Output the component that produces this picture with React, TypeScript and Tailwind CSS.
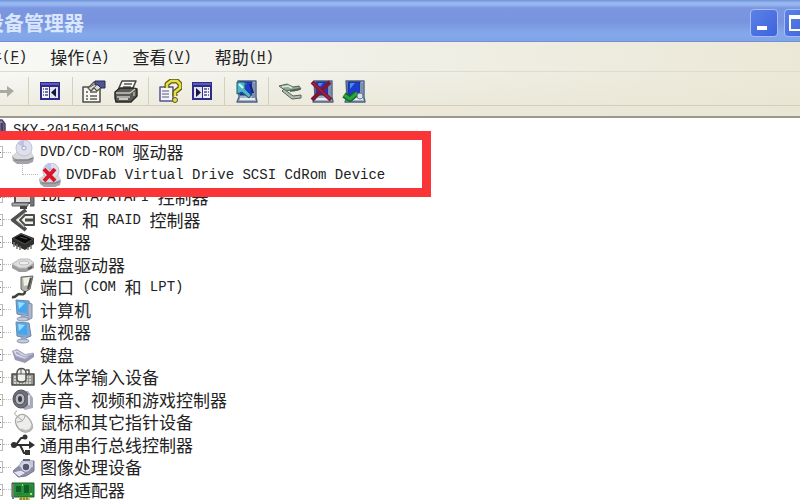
import type { ReactNode } from "react";

const cjk = "font-['Noto_Sans_CJK_SC',sans-serif]";
const mono = "font-['Liberation_Mono','Noto_Sans_CJK_SC',monospace]";

function Svg({ children, size = "size-6" }: { children: ReactNode; size?: string }) {
  return (
    <svg viewBox="0 0 24 24" className={`${size} shrink-0`} aria-hidden="true" strokeLinejoin="round">
      {children}
    </svg>
  );
}

/* Latin runs are set in a monospaced face, Chinese runs in a slightly larger one. */
function Label({ text }: { text: string }) {
  return (
    <span className={`flex items-center whitespace-pre text-[17px] leading-5 ${cjk}`}>
      {text.split(/([\x20-\x7e]+)/).filter(Boolean).map((part, i) => (
        <span key={i} className={/^[\x20-\x7e]/.test(part) ? `text-sm leading-5 ${mono}` : undefined}>
          {part}
        </span>
      ))}
    </span>
  );
}

/* ---------- toolbar icons ---------- */

const ForwardIcon = () => (
  <Svg>
    <path d="M0 11h13V7l7 5-7 6v-4H0z" fill="#aaa9a2" />
  </Svg>
);

function PaneIcon({ flip }: { flip?: boolean }) {
  return (
    <Svg>
      <g transform={flip ? "matrix(-1 0 0 1 24 0)" : undefined}>
        <rect x="2" y="3" width="20" height="18" fill="#2d2c8c" />
        <rect x="3" y="4" width="18" height="2" fill="#5b5bb5" />
        <rect x="4" y="8" width="7" height="11" fill="#f4f4fa" />
        <rect x="12" y="8" width="8" height="11" fill="#e4e4ee" />
        <path d="M5 10h1m1 0h3M5 13h1m1 0h3M5 16h1m1 0h3" stroke="#4a4a86" strokeWidth="1.5" />
        <path d="M18 9v9l-5-4.500z" fill="#16163c" />
      </g>
    </Svg>
  );
}

const PropertiesIcon = () => (
  <Svg>
    <path d="M1 8h17v15H1z" fill="#f7f7f2" stroke="#4b4b48" strokeWidth="1.5" />
    <path d="M4 13h2m2 0h7M4 17h2m2 0h7M4 20h2m2 0h7" stroke="#5e5e5a" strokeWidth="1.6" />
    <path d="M6 9l6-6 6 1 2 4-5 4-3-3-3 3z" fill="#dcdcd2" stroke="#55554e" strokeWidth="1.3" />
    <path d="M13 2h10v7h-4l-3-3h-3z" fill="#4f5493" stroke="#292b55" />
    <path d="M8 8l5-3M10 10l4-3" stroke="#66665d" />
  </Svg>
);

const PrinterIcon = () => (
  <Svg>
    <path d="M8 2h14l-4 9H4z" fill="#fafaf7" stroke="#444" strokeWidth="1.5" />
    <path d="M10 5h8M9 8h8" stroke="#555" strokeWidth="1.4" />
    <path d="M1 13l5-4h13l4 1v7l-6 6H2l-1-4z" fill="#595955" stroke="#262624" strokeWidth="1.4" />
    <path d="M2 14h14l5-4M3 18h13" stroke="#c8c8bf" strokeWidth="1.4" fill="none" />
    <path d="M5 20h9" stroke="#eee" strokeWidth="1.5" />
    <path d="M20 13v4" stroke="#b3b3a8" strokeWidth="1.5" />
  </Svg>
);

const HelpIcon = () => (
  <Svg>
    <path d="M2 8h13v14H2z" fill="#f3f3fa" stroke="#55558a" strokeWidth="1.5" />
    <path d="M4 12h7M4 15h7M4 18h7" stroke="#8b8ba8" strokeWidth="1.3" />
    <path d="M9 9V5l4-3h6l3 3v4l-5 4v4" fill="none" stroke="#5a5610" strokeWidth="5" />
    <path d="M9 9V5l4-3h6l3 3v4l-5 4v4" fill="none" stroke="#e5df47" strokeWidth="2.600" />
    <circle cx="17" cy="21" r="2.500" fill="#e5df47" stroke="#5a5610" />
  </Svg>
);

function ComputerBase() {
  return (
    <>
      <path d="M4 2h18v16l1 5H3l2-5z" fill="#a5b3c5" stroke="#4d6288" strokeWidth="1.4" />
      <path d="M6 3h12v13H6z" fill="#1c3ccf" stroke="#20336e" />
      <path d="M18 4h3v15h-3z" fill="#7f90ac" />
      <path d="M6 20h15" stroke="#e9edf2" strokeWidth="2" />
      <path d="M8 4h5L8 10z" fill="#4d8be9" />
    </>
  );
}

const ScanIcon = () => (
  <Svg>
    <ComputerBase />
    <path d="M3 3h8v7l6 6-2 3-7-6-5 2z" fill="#51b6c6" stroke="#175670" />
    <path d="M5 5l4 4" stroke="#d5fbff" strokeWidth="2" />
    <path d="M16 5l3 9" stroke="#152176" strokeWidth="2" />
  </Svg>
);

const UpdateIcon = () => (
  <Svg>
    <path d="M1 7l8-2 6 3 6-1 2 3-7 2-3-1-5 1z" fill="#8cac92" stroke="#536757" />
    <path d="M6 10l9 7 8-1v3l-9 1-10-8z" fill="#b3bdaf" stroke="#566055" />
    <path d="M4 8l6-1 4 2" stroke="#dce8da" strokeWidth="1.5" fill="none" />
    <path d="M12 12l10-2" stroke="#4f5f51" strokeWidth="2" />
  </Svg>
);

const UninstallIcon = () => (
  <Svg>
    <ComputerBase />
    <path d="M2 3l19 18M20 3L2 21" stroke="#7d1737" strokeWidth="4" />
    <path d="M3 4l17 16" stroke="#a32446" strokeWidth="1.500" />
  </Svg>
);

const EnableIcon = () => (
  <Svg>
    <ComputerBase />
    <path d="M2 16l6 4 7-6" fill="none" stroke="#146628" strokeWidth="6" />
    <path d="M2 16l6 4 7-6" fill="none" stroke="#27a43b" strokeWidth="3" />
    <circle cx="18" cy="17" r="3" fill="#d9e2e6" stroke="#69798c" />
  </Svg>
);

/* ---------- device icons ---------- */

const OpticalIcon = ({ off }: { off?: boolean }) => (
  <Svg>
    <path d="M1 16l5-4h14l3 5-1 5-5 2H6l-4-3z" fill="#a4a4a8" />
    <path d="M1 16l5-4h14l3 5-6 3H6z" fill="#d9d9de" />
    <ellipse cx="13" cy="8" rx="8" ry="8" fill="#dfe0ee" stroke="#c2c3d2" />
    <path d="M13 8l-6-4a8 8 0 0 1 6-4z" fill="#bcc4e9" />
    <circle cx="13" cy="8" r="2" fill="#f8f8ff" stroke="#a1a3b8" />
    <path d="M4 20h13l5-2" stroke="#85868d" strokeWidth="1.500" fill="none" />
    {off && <path d="M6 6l11 12M17 6L6 18" stroke="#dc1427" strokeWidth="4" />}
  </Svg>
);

const IdeIcon = () => (
  <Svg>
    <path d="M4 5h16v13H4z" fill="#dfdfdc" stroke="#555" strokeWidth="2" />
    <path d="M20 8h3v13h-4" fill="#777" stroke="#555" />
    <path d="M1 18h16v3H1z" fill="#aaa" stroke="#666" />
    <path d="M9 21h7v3H9z" fill="#444" />
  </Svg>
);

const ScsiIcon = () => (
  <Svg>
    <path d="M15 2L2 12l13 10" fill="none" stroke="#50504e" strokeWidth="4" />
    <path d="M15 4L5 12l8 7" fill="none" stroke="#b9b9b4" strokeWidth="1" />
    <path d="M23 7h-9l-5 5 5 5h9z" fill="#f2f2ef" stroke="#4c4c4a" strokeWidth="2" />
    <path d="M14 12h8" stroke="#4c4c4a" strokeWidth="3" />
  </Svg>
);

const CpuIcon = () => (
  <Svg>
    <path d="M1 8l9-5 13 5v6l-9 6L1 14z" fill="#30302f" />
    <path d="M2 8l8-4 12 5-8 5z" fill="#090909" stroke="#515150" />
    <path d="M3 12v5m3-3v5m3-3v4m8-3v3m3-5v4" stroke="#77776f" strokeWidth="1.500" />
    <path d="M9 7l7 2" stroke="#555" />
  </Svg>
);

const DiskIcon = () => (
  <Svg>
    <path d="M1 11l8-5h9l5 4v5l-8 4H8l-7-4z" fill="#9c9c9b" />
    <path d="M1 11l8-5h9l5 4-8 5H8z" fill="#dedfdd" stroke="#bbb" />
    <ellipse cx="13" cy="10" rx="5" ry="2" fill="#efefef" stroke="#bcbcbc" />
    <path d="M17 16l4-2" stroke="#5b5d5d" strokeWidth="2" />
  </Svg>
);

const PortIcon = () => (
  <Svg>
    <path d="M10 2l12-1-3 13-5 3-4-3z" fill="#b4b4ac" stroke="#666660" />
    <path d="M12 3l7-1-2 8-4 1z" fill="#efefe8" />
    <path d="M14 16c0 5-4 3-6 3s-3 4-7 3" fill="none" stroke="#40403b" strokeWidth="2.500" />
    <path d="M20 3l-3 11" stroke="#4d4d46" strokeWidth="2" />
  </Svg>
);

const MonitorIcon = ({ tower }: { tower?: boolean }) => (
  <Svg>
    <path d="M5 2l13 1 2 13-5 2-9-2z" fill="#81a9cf" stroke="#6687af" />
    <path d="M6 3l10 1v11L7 14z" fill="#43a7ed" />
    <path d="M7 4l7 1-6 6z" fill="#9edcff" />
    <path d="M10 17h5l1 4H9z" fill="#9cabc5" />
    <ellipse cx="12" cy="21" rx="6" ry="2" fill="#c2cadb" stroke="#8996b0" />
    {tower && <path d="M17 5l4 1v14l-4 2z" fill="#adb6cd" stroke="#8089a6" />}
  </Svg>
);

const KeyboardIcon = () => (
  <Svg>
    <path d="M1 8l5-2 8 5 9-1v4l-9 6-10-3z" fill="#9998b3" />
    <path d="M2 8l4-1 8 5 8-2-8 6-9-3z" fill="#dbdaeb" stroke="#b3b2c9" />
    <path d="M5 10l9 4 5-2M5 9l4 2" stroke="#a1a0bd" fill="none" />
  </Svg>
);

const HidIcon = () => (
  <Svg>
    <path d="M1 9h22v11H1z" fill="#989894" stroke="#4a4a48" strokeWidth="1.500" />
    <path d="M3 12h18M3 15h18M3 18h18" stroke="#e4e4de" strokeWidth="1.500" strokeDasharray="2 1" />
    <path d="M6 8c0-6 9-6 9 0v6c0 4-9 4-9 0z" fill="#efefeb" stroke="#4f4f4b" strokeWidth="1.500" />
    <path d="M10 4v5M6 9h9" stroke="#555" />
    <path d="M15 5h3v4" stroke="#555" strokeWidth="1.500" fill="none" />
  </Svg>
);

const SoundIcon = () => (
  <Svg>
    <path d="M12 3h5l5 7v10l-8 2-7-5z" fill="#aaaab9" />
    <ellipse cx="10" cy="11" rx="8" ry="9" fill="#70707c" stroke="#50505b" />
    <ellipse cx="9" cy="11" rx="5" ry="6" fill="#b7b7c1" stroke="#484850" />
    <ellipse cx="9" cy="11" rx="2" ry="3" fill="#3c3c43" />
    <path d="M18 7v10" stroke="#dedee8" strokeWidth="2" />
  </Svg>
);

const MouseIcon = () => (
  <Svg>
    <path d="M7 6c5-4 11 0 14 8 3 7-7 11-13 5C4 15 3 9 7 6z" fill="#ededec" stroke="#a6a6a3" strokeWidth="1.300" />
    <path d="M6 6C3 5 3 2 6 1M6 12c5 0 7-2 8-6M7 7l5 4" fill="none" stroke="#a1a19e" />
    <path d="M10 19c5 4 11 1 11-4" fill="none" stroke="#bcbcb8" strokeWidth="2" />
  </Svg>
);

const UsbIcon = () => (
  <Svg>
    <path d="M2 12h18M5 12l5-7h4M9 12l4 8h3" fill="none" stroke="#2d2d2b" strokeWidth="2" />
    <circle cx="3" cy="12" r="3" fill="#30302e" />
    <path d="M18 8l6 4-6 4z" fill="#30302e" />
    <circle cx="14" cy="4" r="2.500" fill="#343432" />
    <path d="M14 17h5v5h-5z" fill="#343432" />
  </Svg>
);

const ImagingIcon = () => (
  <Svg>
    <path d="M2 16l7-6 2-4h12v10l-8 5-8 1z" fill="#8e8fae" stroke="#77778f" />
    <path d="M11 6h11v6l-9 3-5-4z" fill="#c5c6db" />
    <path d="M2 17l8-2 5 3-7 4z" fill="#e3e3ef" stroke="#8989a1" />
    <circle cx="15" cy="12" r="4" fill="#54556e" stroke="#ddddea" strokeWidth="1.500" />
    <path d="M12 5h7" stroke="#646582" strokeWidth="2" />
  </Svg>
);

const NetworkIcon = () => (
  <Svg>
    <path d="M1 5h22v14H1z" fill="#24923b" stroke="#176429" />
    <path d="M2 6v15" stroke="#777" strokeWidth="2" />
    <path d="M5 8h5v6H5zM13 7h5v8h-5z" fill="#115e28" />
    <path d="M8 19h11v3H8z" fill="#d0bd4e" />
    <path d="M10 19v3m3-3v3m3-3v3M20 8v6M6 16h5" stroke="#3b6834" />
    <path d="M11 7h1M19 16h2" stroke="#b6e169" strokeWidth="2" />
  </Svg>
);

const HostIcon = () => (
  <Svg>
    <path d="M3 2h17l3 4v15H5z" fill="#8a82a6" stroke="#45405f" strokeWidth="1.500" />
    <path d="M5 4h12v12H5z" fill="#65a8db" />
    <path d="M20 5v14" stroke="#4a3d65" strokeWidth="3" />
  </Svg>
);

/* ---------- pieces ---------- */

function ToolButton({ label, children }: { label: string; children: ReactNode }) {
  return (
    <button type="button" aria-label={label} className="flex h-8 w-8 shrink-0 items-center justify-center">
      {children}
    </button>
  );
}

const Separator = () => (
  <span className="flex h-7 w-3 shrink-0 justify-center">
    <span className="w-px bg-[#d3d0c0]" />
  </span>
);

function DeviceRow({ icon, name }: { icon: ReactNode; name: string }) {
  return (
    <div className="-ml-2 flex h-full items-center">
      <button
        type="button"
        aria-label={`展开 ${name}`}
        className="flex h-3 w-[11px] shrink-0 items-center justify-center border border-[#b9b9b6] bg-white"
      >
        <span className="h-px w-1.5 bg-[#777]" />
      </button>
      <span className="w-2 shrink-0 border-t border-dotted border-[#bbb]" />
      {icon}
      <span className="ml-[5px]">
        <Label text={name} />
      </span>
    </div>
  );
}

const menus = [
  ["文件", "F"],
  ["操作", "A"],
  ["查看", "V"],
  ["帮助", "H"],
];

const devices: { name: string; icon: ReactNode }[] = [
  { name: "IDE ATA/ATAPI 控制器", icon: <IdeIcon /> },
  { name: "SCSI 和 RAID 控制器", icon: <ScsiIcon /> },
  { name: "处理器", icon: <CpuIcon /> },
  { name: "磁盘驱动器", icon: <DiskIcon /> },
  { name: "端口 (COM 和 LPT)", icon: <PortIcon /> },
  { name: "计算机", icon: <MonitorIcon tower /> },
  { name: "监视器", icon: <MonitorIcon /> },
  { name: "键盘", icon: <KeyboardIcon /> },
  { name: "人体学输入设备", icon: <HidIcon /> },
  { name: "声音、视频和游戏控制器", icon: <SoundIcon /> },
  { name: "鼠标和其它指针设备", icon: <MouseIcon /> },
  { name: "通用串行总线控制器", icon: <UsbIcon /> },
  { name: "图像处理设备", icon: <ImagingIcon /> },
  { name: "网络适配器", icon: <NetworkIcon /> },
];

export default function App() {
  return (
    <div className={`flex h-screen flex-col overflow-hidden bg-white text-[#222] ${cjk}`}>
      <header className="flex h-[42px] shrink-0 items-center justify-between overflow-hidden border-b border-[#7190d6] bg-[linear-gradient(#6f94d8_0px,#98b9f2_3px,#96b4f0_5px,#7a97e0_8px,#7994df_22px,#84a9ea_34px,#80a4e8_40px)]">
        <h1 className="-ml-4 pt-1 text-xl font-bold text-[#d9e6fb]">设备管理器</h1>
        <div className="-mr-3 flex shrink-0 gap-1.5 pt-1">
          <button
            type="button"
            aria-label="最小化"
            className="flex size-7 items-end rounded border border-[#a5bdf5] bg-linear-to-br from-[#5c82e6] to-[#3d62dd] p-1.5"
          >
            <span className="h-1 w-2.5 bg-white" />
          </button>
          <button
            type="button"
            aria-label="最大化"
            className="flex size-7 items-center justify-center rounded border border-[#a5bdf5] bg-linear-to-br from-[#5c82e6] to-[#3d62dd]"
          >
            <span className="h-4 w-[18px] border-2 border-t-4 border-white" />
          </button>
        </div>
      </header>

      <div className="shrink-0 bg-linear-to-r from-[#f8f8f5] via-[#f0efe6] to-[#ebe8d7]">
        <nav className="-ml-8 flex h-[30px] items-center gap-[23px] border-b border-[#dedccd]">
          {menus.map(([name, key]) => (
            <button
              key={key}
              type="button"
              className="flex shrink-0 items-center text-[17px] leading-5 whitespace-nowrap"
            >
              {name}
              <span className={`text-sm leading-5 ${mono}`}>
                (<u className="underline-offset-2">{key}</u>)
              </span>
            </button>
          ))}
        </nav>
        <div
          role="toolbar"
          aria-label="工具栏"
          className="flex h-[34px] items-center border-b border-[#d2cfbd] bg-linear-to-b from-transparent to-[#e8e5d3]/60 pt-1"
        >
          <div className="-ml-2.5 flex items-center">
            <ToolButton label="前进"><ForwardIcon /></ToolButton>
            <Separator />
            <ToolButton label="显示/隐藏控制台树"><PaneIcon /></ToolButton>
            <Separator />
            <ToolButton label="属性"><PropertiesIcon /></ToolButton>
            <ToolButton label="打印"><PrinterIcon /></ToolButton>
            <Separator />
            <ToolButton label="帮助"><HelpIcon /></ToolButton>
            <ToolButton label="显示/隐藏操作窗格"><PaneIcon flip /></ToolButton>
            <Separator />
            <ToolButton label="扫描检测硬件改动"><ScanIcon /></ToolButton>
            <Separator />
            <ToolButton label="更新驱动程序"><UpdateIcon /></ToolButton>
            <ToolButton label="卸载"><UninstallIcon /></ToolButton>
            <ToolButton label="启用"><EnableIcon /></ToolButton>
          </div>
        </div>
        <div className="h-3 border-b-2 border-[#9c988a] bg-[#e9e6d6]/70" />
      </div>

      <main className="min-h-0 flex-1 overflow-hidden">
        <div className="-ml-[18px] flex h-[23px] items-center gap-[7px]">
          <HostIcon />
          <Label text="SKY-20150415CWS" />
        </div>

        <div className="relative z-10">
          <div className="absolute -top-2.5 -bottom-[11px] -left-3 w-[443px] border-[9px] border-[#fa3537] bg-white" />
          <div className="relative h-[22px]">
            <DeviceRow icon={<OpticalIcon />} name="DVD/CD-ROM 驱动器" />
          </div>
          <div className="relative flex h-[23px] items-center pl-[22px]">
            <span className="mb-3 h-3 w-4 shrink-0 border-b border-l border-dotted border-[#bbb]" />
            <OpticalIcon off />
            <span className="ml-1">
              <Label text="DVDFab Virtual Drive SCSI CdRom Device" />
            </span>
          </div>
        </div>

        <ul>
          {devices.map((d) => (
            <li key={d.name} className="odd:h-[22px] even:h-[23px]">
              <DeviceRow icon={d.icon} name={d.name} />
            </li>
          ))}
        </ul>
      </main>
    </div>
  );
}
